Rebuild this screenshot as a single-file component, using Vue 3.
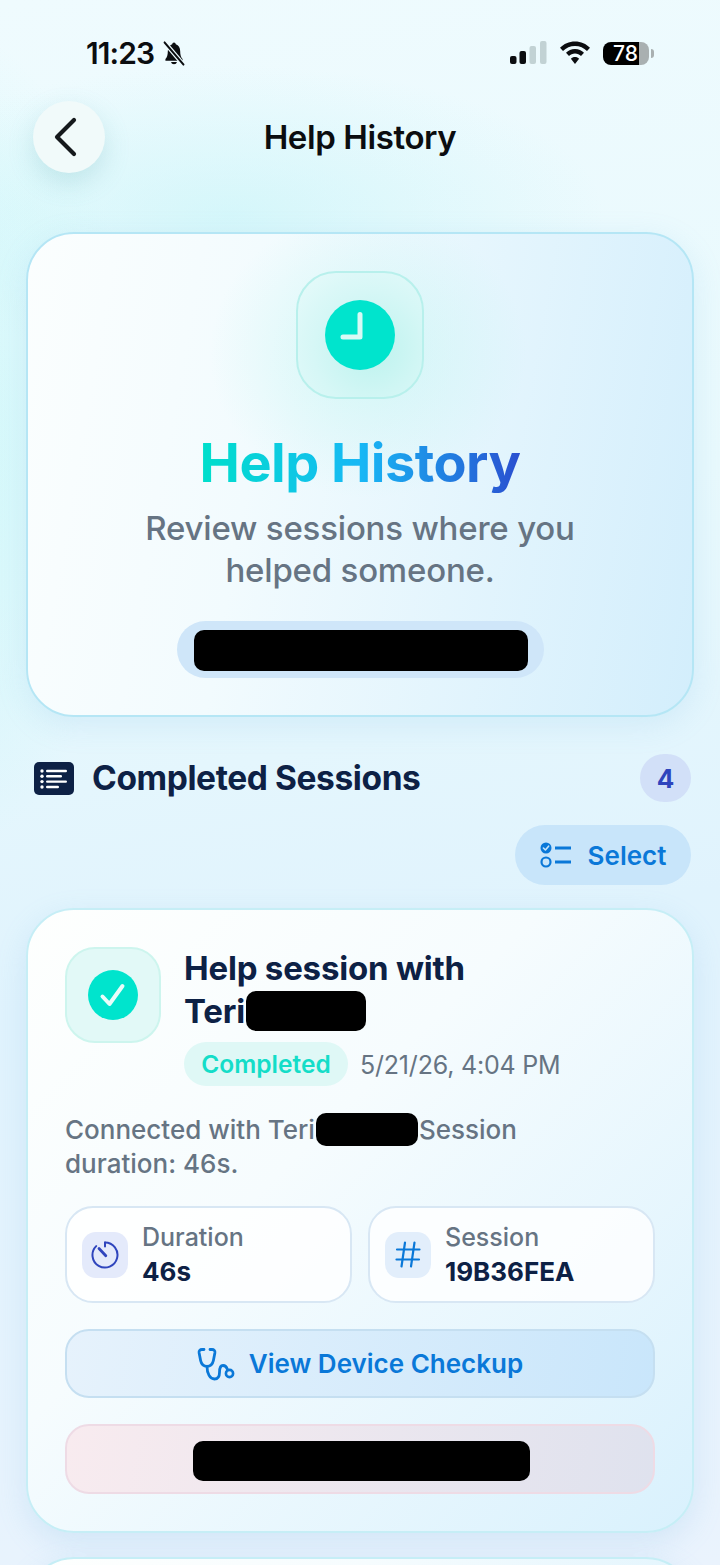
<script setup>
const stats = [
  { label: 'Duration', value: '46s', kind: 'timer' },
  { label: 'Session', value: '19B36FEA', kind: 'hash' }
]
</script>

<template>
  <div class="page">
    <div class="status">
      <div class="status-left">
        <span class="time">11:23</span>
        <svg class="bell" width="24" height="25" viewBox="0 0 28 26" preserveAspectRatio="none">
          <path d="M14 1.500c-1.200 0-2 .8-2.100 2C8.600 4.500 6.800 7.200 6.800 10.500c0 4.500-1 6.600-2.800 8.300v1.700h20v-1.700c-1.800-1.700-2.800-3.800-2.800-8.300 0-3.300-1.800-6-5.100-7-.1-1.200-.9-2-2.100-2z" fill="#0b0d10" />
          <path d="M10.500 21.800a3.600 3.200 0 0 0 7 0z" fill="#0b0d10" />
          <path d="M3 1.500 25 24.500" stroke="#eefbfe" stroke-width="5" />
          <path d="M3 1.500 25 24.500" stroke="#0b0d10" stroke-width="2.200" stroke-linecap="round" />
        </svg>
      </div>
      <div class="status-right">
        <svg width="37" height="24" viewBox="0 0 37 24">
          <rect x="0" y="15" width="6.500" height="8" rx="2" fill="#0b0d10" />
          <rect x="9.500" y="10" width="6.500" height="13" rx="2" fill="#0b0d10" />
          <rect x="19.500" y="5" width="6.500" height="18" rx="2" fill="#c2d2d4" />
          <rect x="30" y="0" width="6.500" height="23" rx="2" fill="#c2d2d4" />
        </svg>
        <svg width="32" height="24" viewBox="0 0 32 24">
          <path d="M16 0.500C10 .5 4.800 2.900 1 6.800l3 3.200C7.100 6.800 11.300 4.900 16 4.900s8.900 1.900 12 5.100l3-3.200C27.200 2.900 22 .5 16 .5z" fill="#0b0d10" />
          <path d="M16 8C12.400 8 9.300 9.400 7 11.800l3 3.200c1.500-1.600 3.600-2.600 6-2.600s4.500 1 6 2.600l3-3.200C22.700 9.400 19.600 8 16 8z" fill="#0b0d10" />
          <path d="M16 16c-1.700 0-3.100.7-4.100 1.700L16 23l4.100-5.300c-1-1-2.400-1.700-4.100-1.700z" fill="#0b0d10" />
        </svg>
        <div class="battery">
          <div class="battery-body"><span>78</span></div>
          <div class="battery-nub"></div>
        </div>
      </div>
    </div>

    <div class="nav">
      <button class="back">
        <svg width="30" height="42" viewBox="0 0 30 42">
          <path d="M23 4 6 21 23 38" fill="none" stroke="#15191c" stroke-width="4.200" stroke-linecap="round" stroke-linejoin="round" />
        </svg>
      </button>
      <div class="nav-title">Help History</div>
    </div>

    <section class="hero">
      <div class="hero-icon">
        <div class="hero-clock">
          <svg width="70" height="70" viewBox="0 0 70 70">
            <path d="M35 14.500V37H18" fill="none" stroke="#d8faf5" stroke-width="5" stroke-linecap="round" stroke-linejoin="round" />
          </svg>
        </div>
      </div>
      <h1 class="hero-title">Help History</h1>
      <p class="hero-sub">Review sessions where you<br />helped someone.</p>
      <div class="hero-pill"><span class="redact hero-redact"></span></div>
    </section>

    <div class="section-head">
      <svg width="40" height="33" viewBox="0 0 40 33">
        <rect width="40" height="33" rx="5" fill="#0d2145" />
        <g fill="#fff">
          <circle cx="8" cy="9" r="1.700" />
          <circle cx="8" cy="14.300" r="1.700" />
          <circle cx="8" cy="19.600" r="1.700" />
          <circle cx="8" cy="25" r="1.700" />
          <rect x="12" y="7.800" width="21" height="2.400" rx="1.200" />
          <rect x="12" y="13.100" width="16" height="2.400" rx="1.200" />
          <rect x="12" y="18.400" width="21" height="2.400" rx="1.200" />
          <rect x="12" y="23.800" width="13" height="2.400" rx="1.200" />
        </g>
      </svg>
      <h2 class="section-title">Completed Sessions</h2>
      <span class="count">4</span>
    </div>

    <div class="select-row">
      <button class="select">
        <svg width="32" height="26" viewBox="0 0 32 26">
          <circle cx="6" cy="6" r="5.500" fill="#0a78d8" />
          <path d="M3.400 6l2 2 3.200-3.800" fill="none" stroke="#c8e5fa" stroke-width="1.600" stroke-linecap="round" stroke-linejoin="round" />
          <circle cx="6" cy="20" r="4.500" fill="none" stroke="#0a78d8" stroke-width="2.200" />
          <path d="M15 6h16M15 20h16" stroke="#0a78d8" stroke-width="3" />
        </svg>
        <span>Select</span>
      </button>
    </div>

    <article class="card">
      <div class="card-head">
        <div class="check-box">
          <svg width="50" height="50" viewBox="0 0 50 50">
            <circle cx="25" cy="25" r="25" fill="#00e4cd" />
            <path d="M14.500 26.500l7 7.500 13-18" fill="none" stroke="#e9fdfa" stroke-width="4" stroke-linecap="round" stroke-linejoin="round" />
          </svg>
        </div>
        <div class="card-info">
          <h3 class="card-title">Help session with<br />Teri<span class="redact name-redact"></span></h3>
          <div class="card-meta">
            <span class="badge">Completed</span>
            <span class="date">5/21/26, 4:04 PM</span>
          </div>
        </div>
      </div>

      <p class="desc">Connected with Teri<span class="redact desc-redact"></span>Session<br />duration: 46s.</p>

      <div class="stats">
        <div v-for="s in stats" :key="s.label" class="stat">
          <div class="stat-icon" :class="s.kind">
            <svg v-if="s.kind === 'timer'" width="28" height="28" viewBox="0 0 28 28">
              <path d="M14 1.500A12.500 12.500 0 1 1 5.200 5.100" fill="none" stroke="#2f45bd" stroke-width="2" stroke-linecap="round" />
              <path d="M14 1.500v4" stroke="#2f45bd" stroke-width="2" stroke-linecap="round" />
              <path d="M8 7.500l6.800 7.300" stroke="#2f45bd" stroke-width="2.800" stroke-linecap="round" />
            </svg>
            <svg v-else width="26" height="27" viewBox="0 0 26 27">
              <path d="M10 1.500 6.500 25.500M19.500 1.500 16 25.500M2 8.500h22.500M1.500 18.500h22.500" fill="none" stroke="#0a78d8" stroke-width="2.200" stroke-linecap="round" />
            </svg>
          </div>
          <div class="stat-text">
            <div class="stat-label">{{ s.label }}</div>
            <div class="stat-value">{{ s.value }}</div>
          </div>
        </div>
      </div>

      <button class="checkup">
        <svg width="38" height="34" viewBox="0 0 38 34">
          <path d="M7 2.500H5C3 2.500 1.800 3.800 2.100 5.800l1.500 7.700c.8 3.800 3.400 5.800 6.400 5.800s5.600-2 6.400-5.800l1.500-7.700c.3-2-.9-3.300-2.900-3.300h-2" fill="none" stroke="#0a78d8" stroke-width="2.800" stroke-linecap="round" stroke-linejoin="round" />
          <path d="M10 19.500c0 7 3 12.500 7.500 12.500 3.800 0 5-3 5-6.500 0-3.500 1-7 3.500-7s3.700 1.500 4.300 3.700" fill="none" stroke="#0a78d8" stroke-width="2.800" stroke-linecap="round" />
          <circle cx="32.500" cy="26.500" r="3.600" fill="none" stroke="#0a78d8" stroke-width="2.600" />
        </svg>
        <span>View Device Checkup</span>
      </button>

      <div class="danger"><span class="redact danger-redact"></span></div>
    </article>

    <article class="card next"></article>
  </div>
</template>

<style>
html,
body {
  margin: 0;
  background: #e9f6fd;
}
</style>

<style scoped>
* {
  box-sizing: border-box;
}

.page {
  width: 720px;
  height: 1565px;
  overflow: hidden;
  padding: 0 26px;
  font-family: Inter, "Liberation Sans", sans-serif;
  background:
    radial-gradient(300px 600px at -70px 440px, rgba(170, 245, 245, 0.45), transparent 70%),
    radial-gradient(500px 200px at 230px 215px, rgba(190, 243, 247, 0.5), transparent 75%),
    linear-gradient(170deg, #effbfe 0%, #e8f9fd 35%, #e0f3fd 60%, #eaf3fd 100%);
}

.status {
  height: 101px;
  margin: 0 -26px;
  padding: 41px 66px 0 86px;
  display: flex;
  justify-content: space-between;
  align-items: flex-start;
}

.status-left {
  display: flex;
  align-items: center;
  gap: 8px;
  height: 24px;
}

.time {
  font-size: 30px;
  font-weight: 600;
  letter-spacing: -0.9px;
  color: #0b0d10;
  line-height: 24px;
}

.status-right {
  display: flex;
  align-items: center;
  gap: 12px;
  height: 24px;
}

.battery {
  display: flex;
  align-items: center;
  gap: 2px;
}

.battery-body {
  width: 46px;
  height: 23px;
  padding-left: 10px;
  border-radius: 8px;
  background: linear-gradient(90deg, #000 0 78%, #a9b0b1 78% 100%);
}

.battery-body span {
  display: block;
  color: #fff;
  font-size: 21px;
  font-weight: 500;
  line-height: 23px;
}

.battery-nub {
  width: 3px;
  height: 9px;
  border-radius: 0 3px 3px 0;
  background: #a9b0b1;
}

.nav {
  display: grid;
  grid-template-columns: 72px 1fr 72px;
  align-items: center;
  margin: 0 7px;
  height: 72px;
}

.back {
  width: 72px;
  height: 72px;
  border: 0;
  padding: 0 6px 0 0;
  border-radius: 50%;
  background: #f1fafa;
  box-shadow: 0 10px 26px rgba(90, 170, 180, 0.24);
  display: flex;
  align-items: center;
  justify-content: center;
}

.nav-title {
  text-align: center;
  font-size: 33px;
  font-weight: 600;
  letter-spacing: -0.4px;
  color: #0b0d10;
}

.hero {
  margin-top: 59px;
  height: 485px;
  padding-top: 37px;
  border: 2px solid #b5e6f5;
  border-radius: 48px;
  display: flex;
  flex-direction: column;
  align-items: center;
  background:
    radial-gradient(220px 200px at 340px 120px, rgba(190, 245, 240, 0.55), transparent 72%),
    linear-gradient(100deg, #fbfefe 0%, #f2fbfe 35%, #d3eefc 100%);
  box-shadow: 0 8px 30px rgba(120, 190, 225, 0.18);
}

.hero-icon {
  width: 128px;
  height: 128px;
  border-radius: 40px;
  border: 2px solid #b8f0ec;
  background: radial-gradient(circle at 60% 62%, #bdf3ee 0%, #d6f7f6 55%, rgba(234, 251, 251, 0.7) 100%);
  display: flex;
  align-items: center;
  justify-content: center;
}

.hero-clock {
  width: 70px;
  height: 70px;
  border-radius: 50%;
  background: #00e4cd;
}

.hero-clock svg {
  display: block;
}

.hero-title {
  margin: 34px 0 0;
  font-size: 54px;
  line-height: 60px;
  font-weight: 700;
  letter-spacing: -0.5px;
  background: linear-gradient(90deg, #00dfcb 0%, #17b8f5 50%, #2a4fd0 100%);
  -webkit-background-clip: text;
  background-clip: text;
  color: transparent;
}

.hero-sub {
  margin: 14px 0 0;
  font-size: 33px;
  line-height: 42px;
  font-weight: 500;
  letter-spacing: -0.2px;
  color: #667483;
  text-align: center;
}

.hero-pill {
  margin-top: 30px;
  width: 367px;
  height: 57px;
  padding: 1px 0 0 1px;
  border-radius: 29px;
  background: #cfe6f9;
  display: flex;
  align-items: center;
  justify-content: center;
}

.redact {
  display: inline-block;
  background: #000;
  border-radius: 10px;
}

.hero-redact {
  width: 334px;
  height: 41px;
}

.section-head {
  margin: 37px 3px 0 8px;
  height: 48px;
  display: flex;
  align-items: center;
}

.section-title {
  margin: 0 0 0 18px;
  flex: 1;
  font-size: 33.5px;
  font-weight: 700;
  letter-spacing: -0.4px;
  color: #0d2145;
}

.count {
  width: 51px;
  height: 48px;
  border-radius: 24px;
  background: #d2e0f8;
  color: #2f45bd;
  font-size: 26px;
  font-weight: 700;
  display: flex;
  align-items: center;
  justify-content: center;
}

.select-row {
  margin: 23px 3px 0 0;
  display: flex;
  justify-content: flex-end;
}

.select {
  width: 176px;
  height: 60px;
  border: 0;
  border-radius: 30px;
  background: #c8e5fa;
  color: #0a78d8;
  font-family: inherit;
  font-size: 26px;
  font-weight: 600;
  display: flex;
  align-items: center;
  justify-content: center;
  gap: 16px;
}

.card {
  margin-top: 23px;
  padding: 37px 37px 37px;
  border: 2px solid #c6eef6;
  border-radius: 48px;
  background: linear-gradient(135deg, #fefffe 0%, #f6fcfe 40%, #d9f1fd 100%);
  box-shadow: 0 10px 30px rgba(120, 180, 225, 0.2);
}

.card-head {
  display: flex;
  gap: 23px;
}

.check-box {
  flex: none;
  width: 96px;
  height: 96px;
  border-radius: 30px;
  border: 2px solid #cdf5ee;
  background: #e2f9f7;
  display: flex;
  align-items: center;
  justify-content: center;
}

.check-box svg {
  display: block;
}

.card-title {
  margin: 0;
  font-size: 33px;
  line-height: 43px;
  font-weight: 700;
  letter-spacing: -0.2px;
  color: #0d2145;
}

.name-redact {
  width: 120px;
  height: 40px;
  vertical-align: top;
  margin: 1px 0 0 1px;
}

.card-meta {
  margin-top: 9px;
  display: flex;
  align-items: center;
  gap: 12px;
}

.badge {
  width: 164px;
  height: 44px;
  border-radius: 22px;
  background: #dff8f6;
  color: #14ddc8;
  font-size: 24.5px;
  font-weight: 600;
  display: flex;
  align-items: center;
  justify-content: center;
}

.date {
  margin-top: 1px;
  font-size: 25px;
  letter-spacing: -0.2px;
  color: #667483;
}

.desc {
  margin: 27px 0 0;
  font-size: 26px;
  line-height: 34px;
  font-weight: 500;
  color: #667483;
}

.desc-redact {
  width: 102px;
  height: 33px;
  vertical-align: top;
  margin-left: 1px;
  margin-right: 1px;
}

.stats {
  margin-top: 25px;
  display: grid;
  grid-template-columns: 1fr 1fr;
  gap: 16px;
}

.stat {
  height: 97px;
  padding: 0 14px 0 15px;
  border: 2px solid #d8e7f4;
  border-radius: 28px;
  background: rgba(255, 255, 255, 0.8);
  display: flex;
  align-items: center;
  gap: 14px;
}

.stat-icon {
  flex: none;
  width: 46px;
  height: 46px;
  border-radius: 14px;
  display: flex;
  align-items: center;
  justify-content: center;
}

.stat-icon.timer {
  background: #e4eafb;
}

.stat-icon.hash {
  background: #e2eefb;
}

.stat-label {
  font-size: 25px;
  line-height: 33px;
  font-weight: 500;
  color: #667483;
}

.stat-value {
  font-size: 26px;
  line-height: 35px;
  font-weight: 700;
  color: #0d2145;
}

.checkup {
  margin-top: 26px;
  width: 100%;
  height: 69px;
  border: 2px solid #c5dff1;
  border-radius: 24px;
  background: linear-gradient(100deg, #e6f2fc 0%, #c9e6fb 100%);
  color: #0a78d8;
  font-family: inherit;
  font-size: 26px;
  font-weight: 600;
  display: flex;
  align-items: center;
  justify-content: center;
  gap: 14px;
}

.danger {
  margin-top: 26px;
  height: 70px;
  padding: 3px 0 0 2px;
  border: 2px solid #eedbe5;
  border-radius: 24px;
  background: linear-gradient(100deg, #f8ebef 0%, #dfe2ee 100%);
  display: flex;
  align-items: center;
  justify-content: center;
}

.danger-redact {
  width: 337px;
  height: 40px;
}

.next {
  margin-top: 24px;
  height: 200px;
}
</style>
